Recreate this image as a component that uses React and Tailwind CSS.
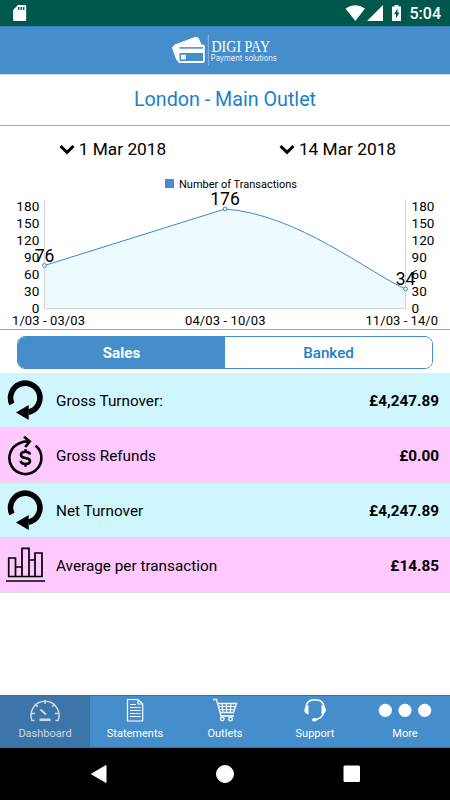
import React, { useState } from 'react';

const ticks = [180, 150, 120, 90, 60, 30, 0];

const Logo = () => (
  <svg width="112" height="36" viewBox="169 34 112 36" className="text-white">
    <path d="M172.4 47.6 174.8 45 195.5 37.3 198.3 38.2 200.8 44.3H181.5L178.8 47V60.8L176.9 60Z" fill="currentColor" stroke="currentColor" strokeLinejoin="round" />
    <rect x="177.8" y="44.5" width="27" height="18.5" rx="2" fill="currentColor" />
    <path d="M179.5 47.9h23.5" stroke="#468ecb" strokeWidth="1.5" />
    <path d="M179.5 53h23.500v8h-23.500z" fill="#468ecb" />
    <rect x="181" y="54.800" width="4.800" height="4.600" fill="currentColor" />
    <path d="M208.3 35v30.5" stroke="#8dbbe2" strokeWidth="1" />
    <text x="211.500" y="51.5" fontSize="17" textLength="58.5" lengthAdjust="spacingAndGlyphs" fill="currentColor" fontFamily="'Liberation Serif', serif">DIGI PAY</text>
    <text x="210.800" y="61" fontSize="8.7" textLength="66" lengthAdjust="spacingAndGlyphs" fill="#e4f0fa" fontFamily="Inter, sans-serif">Payment solutions</text>
  </svg>
);

const StatusBar = () => (
  <div className="h-[26px] shrink-0 bg-[#00574b] flex items-center justify-between pl-3 pr-[9px] text-white">
    <svg width="16" height="18" viewBox="12 4 16 18">
      <path d="M18 5h7a1.2 1.2 0 0 1 1.2 1.2v13.6A1.2 1.2 0 0 1 25 21H14.3a1.2 1.2 0 0 1-1.2-1.2V10Z" fill="currentColor" />
      <path d="M18.7 7v3M21.2 7v3M23.7 7v3" stroke="#00574b" strokeWidth="1.4" />
    </svg>
    <div className="flex items-center">
      <svg width="60" height="20" viewBox="344 3 60 20" fill="currentColor">
        <path d="M346.5 8.5Q356.3 2 366 8.5L356.3 21Z" />
        <path d="M384 5v16h-16Z" />
        <path d="M393 6.5h2.5V5h4v1.5h2.5V21h-9z" />
        <path d="M398.5 8.5v4h2l-3.5 6v-4.2h-2z" fill="#00574b" />
      </svg>
      <span className="text-[16px] leading-none font-medium ml-[7px] pt-[2px]">5:04</span>
    </div>
  </div>
);

const TransactionsChart = () => (
  <svg width="450" height="157" viewBox="0 172 450 157" className="block" fontFamily="Roboto, sans-serif">
    <rect x="165" y="179" width="9" height="9" fill="#468ecb" />
    <text x="179" y="188" fontSize="11" textLength="118">Number of Transactions</text>

    <path d="M44.5 265.5 225 209C297 214 369.5 273 405.5 289V308H44.5Z" fill="#edfbff" />
    <path d="M44.5 199.5V308.5H405.5V199.5" fill="none" stroke="#d3d6d8" />
    <path d="M44.5 265.5 225 209C297 214 369.5 273 405.5 289" fill="none" stroke="#3b88cc" strokeWidth="1" />

    {ticks.map((tick, i) => (
      <g key={tick} fontSize="13.5" letterSpacing="0.1">
        <text x="39.4" y={211 + i * 16.95} textAnchor="end">{tick}</text>
        <text x="411.5" y={211 + i * 16.95}>{tick}</text>
      </g>
    ))}

    <g fill="#fff" stroke="#2f8ad0" strokeWidth="1">
      <circle cx="44.5" cy="265.5" r="1.9" />
      <circle cx="225" cy="209" r="1.9" />
      <circle cx="405.5" cy="289" r="1.9" />
    </g>
    <g fontSize="17.5" textAnchor="middle">
      <text x="44.5" y="261.5">76</text>
      <text x="225" y="205">176</text>
      <text x="405.5" y="285">34</text>
    </g>
    <g fontSize="13">
      <text x="12" y="325" textLength="73">1/03 - 03/03</text>
      <text x="185" y="325" textLength="80.5">04/03 - 10/03</text>
      <text x="365.5" y="325" textLength="72.5">11/03 - 14/0</text>
    </g>
  </svg>
);

const TurnoverIcon = () => (
  <svg width="40" height="42" viewBox="5 379 40 42">
    <path d="M11.9 404A14.7 14.7 0 1 1 28.5 412.2" fill="none" stroke="#000" strokeWidth="5.6" />
    <path d="M16 412.5 28.7 405V420Z" />
  </svg>
);

const RefundIcon = () => (
  <svg width="40" height="42" viewBox="5 434 40 42" fill="none" stroke="#000" strokeWidth="2.6">
    <path d="M35.7 445.8A16 16 0 1 1 20 443Q24 441 29.5 441.5" />
    <path d="M24 436.8 29.8 441.5 25.2 447" />
    <path d="M30 454.5C29.5 452 27.5 451.8 25.5 451.8C22.5 451.8 21 453 21 455C21 459.5 30 456.5 30 461C30 463 28 464 25.5 464C22.5 464 21 463 20.7 460.8M25.5 449.3V452M25.5 464V466.8" />
  </svg>
);

const BarsIcon = () => (
  <svg width="40" height="42" viewBox="5 544.5 40 42" fill="none" stroke="#000" strokeWidth="1.7">
    <path d="M8.7 577V558.5H15.5V577ZM22 577V548.8H29V577ZM35 577V553.5H42V577ZM15.5 577V567.5H22V577ZM29 577V560.5H35V577Z" />
    <path d="M6 581.5H45" />
  </svg>
);

const rows = [
  { label: 'Gross Turnover:', value: '£4,247.89', icon: TurnoverIcon, bg: 'bg-[#cff6ff]' },
  { label: 'Gross Refunds', value: '£0.00', icon: RefundIcon, bg: 'bg-[#ffc8ff]' },
  { label: 'Net Turnover', value: '£4,247.89', icon: TurnoverIcon, bg: 'bg-[#cff6ff]' },
  { label: 'Average per transaction', value: '£14.85', icon: BarsIcon, bg: 'bg-[#ffc8ff]' },
];

const DashboardIcon = () => (
  <svg width="32" height="26" viewBox="29 697 32 26" fill="none" stroke="currentColor" strokeWidth="1.5">
    <path d="M34.5 720.5H32A14 14 0 1 1 58 720.5H55.5" />
    <path d="M45 700v4M35 704l2.8 2.8M55 704l-2.8 2.8M31 713.5h4M55 713.5h4" />
    <path d="M40.5 709.5 46 714.5" strokeWidth="1.8" />
    <path d="M39.5 719.8h11" strokeWidth="2.6" />
  </svg>
);

const StatementsIcon = () => (
  <svg width="20" height="26" viewBox="125 697 20 26" fill="none" stroke="currentColor" strokeWidth="1.2">
    <path d="M127.5 699.5H138L142.7 704V721H127.5ZM138 699.5V704H142.7" />
    <path d="M130 704.5h6M130 707.5h10.5M130 710.5h10.5M130 713.5h10.5M130 716.5h10.5" strokeWidth="1" />
  </svg>
);

const OutletsIcon = () => (
  <svg width="28" height="26" viewBox="211 697 28 26" fill="none" stroke="currentColor" strokeWidth="1.3">
    <path d="M213 699.5H216.5L221 716H234M217.5 703.5H236.5L233.5 712.5H220" />
    <path d="M218.5 706.5H235.5M219.3 709.5H234.5M222 703.5l1 9M226.5 703.5v9M231 703.5l-.8 9" strokeWidth="1.1" />
    <circle cx="222.3" cy="719" r="1.8" />
    <circle cx="230.5" cy="719" r="1.8" />
  </svg>
);

const SupportIcon = () => (
  <svg width="26" height="26" viewBox="302 697 26 26" fill="none" stroke="currentColor" strokeWidth="1.5">
    <path d="M306 708C306 702.5 309.5 699.7 315 699.7S324 702.5 324 708M323.7 713Q321.5 718.5 316 719.5" />
    <path d="M308.5 705V714.5Q304.5 713.5 304.3 710Q304.5 706.5 308.5 705ZM321.5 705V714.5Q325.7 713.5 325.9 710Q325.7 706.5 321.5 705Z" fill="currentColor" stroke="none" />
    <ellipse cx="314.5" cy="719.7" rx="2.6" ry="1.7" fill="currentColor" stroke="none" />
  </svg>
);

const MoreIcon = () => (
  <svg width="56" height="26" viewBox="377 697 56 26" fill="currentColor">
    <circle cx="385.3" cy="710.3" r="6.6" />
    <circle cx="405" cy="710.3" r="6.6" />
    <circle cx="424.7" cy="710.3" r="6.6" />
  </svg>
);

const navItems = [
  { label: 'Dashboard', icon: DashboardIcon },
  { label: 'Statements', icon: StatementsIcon },
  { label: 'Outlets', icon: OutletsIcon },
  { label: 'Support', icon: SupportIcon },
  { label: 'More', icon: MoreIcon },
];

const ChevronDown = () => (
  <svg width="16" height="12" viewBox="0 0 16 12" fill="none" stroke="#000" strokeWidth="3">
    <path d="M1.5 2 8 8.3 14.5 2" />
  </svg>
);

const App = () => {
  const [tab, setTab] = useState('Sales');
  const [page, setPage] = useState('Dashboard');

  return (
    <div className="w-[450px] h-[800px] flex flex-col bg-white text-black font-[Roboto,sans-serif] overflow-hidden">
      <StatusBar />
      <header className="h-[49px] shrink-0 bg-[#468ecb] border-t border-t-[#337fbc] border-b border-b-[#cbd9e8] flex justify-center pt-[7px]">
        <Logo />
      </header>

      <h1 className="h-[51px] shrink-0 border-b border-[#8ba9d6] flex items-center justify-center text-[19.7px] font-normal text-[#1b7fc9]">
        London - Main Outlet
      </h1>

      <div className="h-[46px] shrink-0 grid grid-cols-2 pt-[2px] text-[17.3px]">
        <button type="button" className="flex items-center justify-center gap-1">
          <ChevronDown />
          1 Mar 2018
        </button>
        <button type="button" className="flex items-center justify-center gap-1">
          <ChevronDown />
          14 Mar 2018
        </button>
      </div>

      <div className="h-[158px] shrink-0 border-b border-[#8ba9d6]">
        <TransactionsChart />
      </div>

      <div className="mt-[6px] mb-[4px] mx-[17px] h-[33px] shrink-0 grid grid-cols-2 rounded-lg border border-[#468ecb] overflow-hidden text-[15.2px] font-medium">
        {['Sales', 'Banked'].map((name) => (
          <button
            key={name}
            type="button"
            onClick={() => setTab(name)}
            className={`pt-[2px] ${tab === name ? 'bg-[#468ecb] text-white font-bold' : 'bg-white text-[#1b7fc9]'}`}
          >
            {name}
          </button>
        ))}
      </div>

      <div className="flex-1">
        {rows.map(({ label, value, icon: Icon, bg }, index) => (
          <div key={index} className={`h-[55px] flex items-center pl-[5px] pr-[11px] border-b border-[#dcdfe0] text-[15.3px] ${bg}`}>
            <Icon />
            <span className="ml-[11px] pt-[2px]">{label}</span>
            <span className="ml-auto pt-[2px] font-bold">{value}</span>
          </div>
        ))}
      </div>

      <nav className="h-[53px] shrink-0 grid grid-cols-5 bg-[#468ecb] border-t border-b border-[#2a76b5]">
        {navItems.map(({ label, icon: Icon }) => (
          <button
            key={label}
            type="button"
            onClick={() => setPage(label)}
            className={`flex flex-col items-center pt-[1px] text-[11px] leading-[22px] ${
              page === label ? 'bg-[#3b75aa] text-[#d4d8dc]' : 'text-white'
            }`}
          >
            <Icon />
            {label}
          </button>
        ))}
      </nav>

      <div className="h-[52px] shrink-0 bg-black">
        <svg width="450" height="52" viewBox="0 748 450 52" fill="#fff" stroke="#fff" strokeLinejoin="round">
          <path d="M91.5 774 106 765.5V782.5Z" />
          <circle cx="225" cy="774" r="8.5" />
          <rect x="344" y="766" width="15.5" height="15.5" rx="0.5" />
        </svg>
      </div>
    </div>
  );
};

export default App;
